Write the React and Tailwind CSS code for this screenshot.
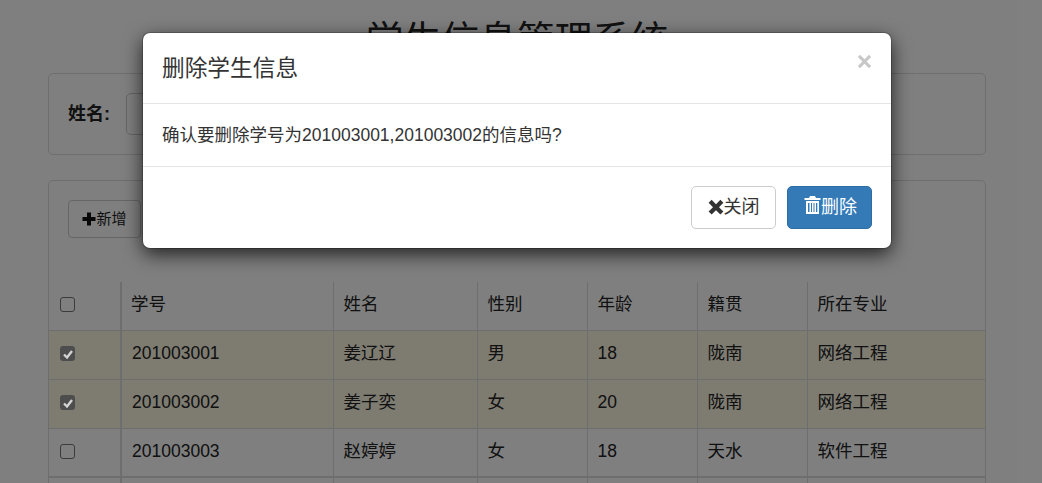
import React from 'react';

const font = { fontFamily: '"Liberation Sans", "Noto Sans CJK SC", sans-serif' };

const students = [
  { id: '201003001', name: '姜辽辽', sex: '男', age: '18', home: '陇南', major: '网络工程', checked: true },
  { id: '201003002', name: '姜子奕', sex: '女', age: '20', home: '陇南', major: '网络工程', checked: true },
  { id: '201003003', name: '赵婷婷', sex: '女', age: '18', home: '天水', major: '软件工程', checked: false },
];

function PlusIcon({ className }) {
  return (
    <svg viewBox="0 0 14 14" className={className} fill="currentColor">
      <path d="M5 .5h4v4.500h4.500v4H9v4.500H5V9H.5V5H5z" />
    </svg>
  );
}

function CloseIcon({ className }) {
  return (
    <svg viewBox="0 0 16 16" className={className} fill="currentColor">
      <path d="M3.600.8 8 5.200 12.400.8l3 3L11 8.200l4.400 4.400-3 3L8 11.200l-4.400 4.400-3-3L5 8.200.6 3.800z" />
    </svg>
  );
}

function TrashIcon({ className }) {
  return (
    <svg viewBox="0 0 17 18" className={className} fill="currentColor">
      <path d="M6 0h5l1 2h4.500v2H.5V2H5zM2 5h13v13H2zm2 2v9h1.500V7zm3 0v9h1V7zm2.500 0v9h1V7zm2.500 0v9h1.300V7z" fillRule="evenodd" />
    </svg>
  );
}

// checked boxes sit above the backdrop so the tick keeps its light grey
function Check({ checked }) {
  if (checked) {
    return (
      <span className="relative z-10 flex h-[15px] w-[15px] items-center justify-center rounded-[3px] bg-[#4d4d4d]">
        <svg viewBox="0 0 12 12" className="h-3 w-3" fill="none" stroke="#d4d4d4" strokeWidth="2.4">
          <path d="M2 6.500 5 9.500 10 3" />
        </svg>
      </span>
    );
  }
  return <span className="block h-[15px] w-[15px] rounded-[3px] border border-[#767676] bg-white" />;
}

function Cell({ children, className = '' }) {
  return <td className={`border-t border-l border-[#ddd] px-[10px] pb-[2px] align-middle ${className}`}>{children}</td>;
}

export default function App() {
  return (
    <div className="relative h-[483px] w-[1042px] overflow-hidden bg-white text-[17.500px] text-[#222]" style={font}>
      <div className="w-[1034px]">
        <h1 className="h-[73px] pt-[14px] text-center text-[37.800px] leading-[52px] font-normal">学生信息管理系统</h1>

        <div className="mx-[48px] flex h-[82px] items-center rounded-[5px] border border-[#ddd] px-[19px]">
          <label className="text-[18px] font-bold text-[#222]">姓名:</label>
          <div className="ml-[16px] h-[42px] w-[220px] rounded-[5px] border border-[#ccc]" />
        </div>

        <div className="mx-[48px] mt-[25px] h-[400px] rounded-[5px] border border-[#ddd]">
          <div className="h-[101px] px-[19px] pt-[19px]">
            <button className="flex h-[38px] w-[73px] items-center justify-center rounded-[4px] border border-[#ccc] text-[15px]">
              <PlusIcon className="h-[14px] w-[14px] text-[#111]" />
              新增
            </button>
          </div>
          <table className="w-full table-fixed border-collapse">
            <colgroup>
              <col className="w-[72px]" />
              <col className="w-[212px]" />
              <col className="w-[144px]" />
              <col className="w-[110px]" />
              <col className="w-[110px]" />
              <col className="w-[110px]" />
              <col />
            </colgroup>
            <thead>
              <tr className="h-[48px]">
                <th className="px-[11px] pb-[2px] font-normal"><Check checked={false} /></th>
                <th className="border-l-2 border-[#ddd] pr-[10px] pb-[4px] pl-[9px] text-left font-normal">学号</th>
                <th className="border-l border-[#ddd] px-[10px] pb-[4px] text-left font-normal">姓名</th>
                <th className="border-l border-[#ddd] px-[10px] pb-[4px] text-left font-normal">性别</th>
                <th className="border-l border-[#ddd] px-[10px] pb-[4px] text-left font-normal">年龄</th>
                <th className="border-l border-[#ddd] px-[10px] pb-[4px] text-left font-normal">籍贯</th>
                <th className="border-l border-[#ddd] px-[10px] pb-[4px] text-left font-normal">所在专业</th>
              </tr>
            </thead>
            <tbody>
              {students.map((s) => (
                <tr key={s.id} className={`h-[49px] ${s.checked ? 'bg-[#fcf8e3]' : ''}`}>
                  <td className="border-t border-[#ddd] px-[11px] pb-[2px] align-middle"><Check checked={s.checked} /></td>
                  <Cell className="border-l-2">{s.id}</Cell>
                  <Cell>{s.name}</Cell>
                  <Cell>{s.sex}</Cell>
                  <Cell>{s.age}</Cell>
                  <Cell>{s.home}</Cell>
                  <Cell>{s.major}</Cell>
                </tr>
              ))}
              <tr className="h-[49px]">
                <td className="border-t-2 border-[#ddd]" />
                <Cell className="border-l-2 border-t-2" />
                <Cell className="border-t-2" />
                <Cell className="border-t-2" />
                <Cell className="border-t-2" />
                <Cell className="border-t-2" />
                <Cell className="border-t-2" />
              </tr>
            </tbody>
          </table>
        </div>
      </div>

      <div className="absolute inset-0 bg-black/50" />

      <div className="absolute top-[33px] left-[143px] z-20 w-[748px] rounded-[7px] bg-white text-[#333] shadow-[0_6px_19px_rgba(0,0,0,0.75),0_0_0_1px_rgba(0,0,0,0.2)]">
        <div className="relative flex h-[71px] items-center border-b border-[#e5e5e5] px-[19px]">
          <h4 className="text-[22.700px] leading-[32px] font-normal">删除学生信息</h4>
          <svg viewBox="0 0 14 14" className="absolute top-[21px] right-[19px] h-[15px] w-[15px] text-[#c8c8c8]" fill="currentColor">
            <path d="M2.800.8 7 5l4.200-4.200 2 2L9 7l4.200 4.200-2 2L7 9l-4.200 4.200-2-2L5 7 .8 2.800z" />
          </svg>
        </div>
        <div className="flex h-[63px] items-center border-b border-[#e5e5e5] px-[19px]">
          确认要删除学号为201003001,201003002的信息吗?
        </div>
        <div className="flex h-[81px] items-start justify-end gap-[11px] px-[19px] pt-[19px]">
          <button className="flex h-[43px] w-[85px] items-center justify-center rounded-[5px] border border-[#ccc] bg-white text-[18px]">
            <CloseIcon className="mb-[2px] h-[16px] w-[16px] text-[#333]" />
            关闭
          </button>
          <button className="flex h-[43px] w-[85px] items-center justify-center rounded-[5px] border border-[#2e6da4] bg-[#337ab7] pl-[2px] text-[18px] text-white">
            <TrashIcon className="mb-[5px] h-[18px] w-[17px]" />
            删除
          </button>
        </div>
      </div>
    </div>
  );
}
